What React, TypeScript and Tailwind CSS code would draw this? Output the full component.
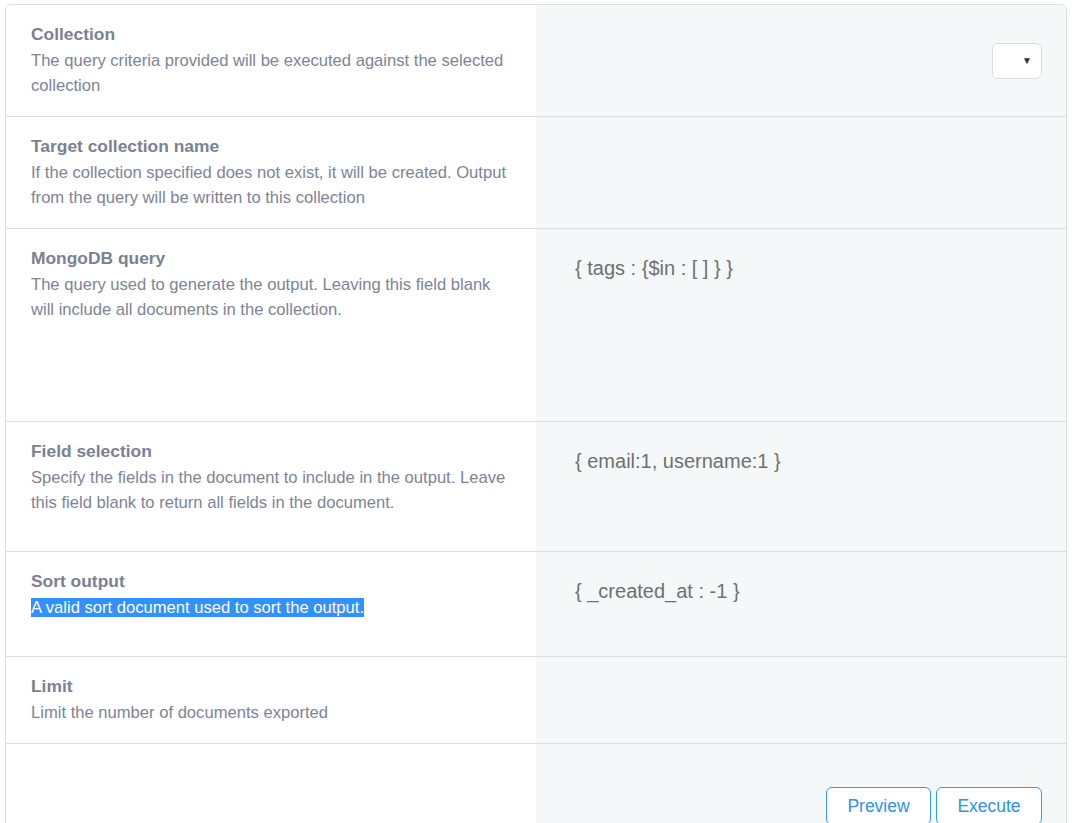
import React from 'react';

const rows = [
  {
    title: 'Collection',
    desc: 'The query criteria provided will be executed against the selected collection',
    h: 'h-[112px]',
    kind: 'select',
  },
  {
    title: 'Target collection name',
    desc: 'If the collection specified does not exist, it will be created. Output from the query will be written to this collection',
    h: 'h-[112px]',
    kind: 'empty',
  },
  {
    title: 'MongoDB query',
    desc: 'The query used to generate the output. Leaving this field blank will include all documents in the collection.',
    h: 'h-[193px]',
    kind: 'text',
    value: '{ tags : {$in : [ ] } }',
  },
  {
    title: 'Field selection',
    desc: 'Specify the fields in the document to include in the output. Leave this field blank to return all fields in the document.',
    h: 'h-[130px]',
    kind: 'text',
    value: '{ email:1, username:1 }',
  },
  {
    title: 'Sort output',
    desc: 'A valid sort document used to sort the output.',
    h: 'h-[105px]',
    kind: 'text',
    value: '{ _created_at : -1 }',
    selected: true,
  },
  {
    title: 'Limit',
    desc: 'Limit the number of documents exported',
    h: 'h-[87px]',
    kind: 'empty',
  },
];

export default function App() {
  return (
    <div className="min-h-screen bg-white pl-[5px] pt-[4px] font-['Liberation_Sans',Arial,sans-serif]">
      <div className="w-[1062px] overflow-hidden rounded-tl-[6px] rounded-tr-[6px] border border-[#dedede]">
        {rows.map((r) => (
          <div key={r.title} className={`flex border-b border-[#dedede] ${r.h}`}>
            <div className="w-[530px] shrink-0 bg-white pl-[25px] pr-[20px] pt-[17px]">
              <h3 className="text-[17.4px] font-bold leading-6 text-[#7a8192]">{r.title}</h3>
              <p className="mt-[2px] text-[16.6px] leading-[25px] text-[#7d8495]">
                {r.selected ? <span className="bg-[#3390ff] text-white">{r.desc}</span> : r.desc}
              </p>
            </div>
            <div className="relative flex-1 bg-[#f5f8f9]">
              {r.kind === 'select' && (
                <div className="absolute right-[24px] top-[38px] flex h-[36px] w-[50px] items-center justify-end rounded-[6px] border border-[#dcdcdc] bg-white pr-[9px]">
                  <span className="text-[10px] leading-none text-[#333]">▼</span>
                </div>
              )}
              {r.kind === 'text' && (
                <div className="pl-[39px] pt-[27px] text-[20px] leading-6 text-[#6f6f6f]">{r.value}</div>
              )}
            </div>
          </div>
        ))}
        <div className="flex h-[120px]">
          <div className="w-[530px] shrink-0 bg-white" />
          <div className="flex flex-1 items-start justify-end gap-[5px] bg-[#f5f8f9] pr-[24px] pt-[43px]">
            <button className="h-[38px] w-[105px] rounded-[6px] border border-[#3a9ce4] bg-white text-[17.5px] text-[#3191e2]">
              Preview
            </button>
            <button className="h-[38px] w-[106px] rounded-[6px] border border-[#3a9ce4] bg-white text-[17.5px] text-[#3191e2]">
              Execute
            </button>
          </div>
        </div>
      </div>
    </div>
  );
}
